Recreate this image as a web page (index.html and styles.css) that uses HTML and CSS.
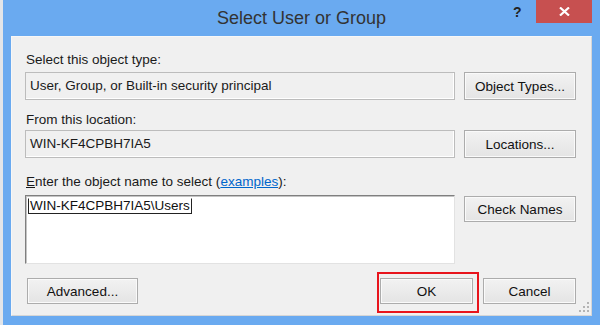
FILE: index.html
```html
<!DOCTYPE html>
<html lang="en">
  <head>
    <meta charset="UTF-8" />
    <title>Select User or Group</title>
    <link rel="stylesheet" href="styles.css">
  </head>
  <body>
    <div class="window">
      <div class="titlebar">
        <div class="title">Select User or Group</div>
        <div class="caption-buttons">
          <span class="help">?</span>
          <span class="close">
            <svg width="11" height="9" viewBox="0 0 11 9">
              <path d="M1 0.5 L10 8.5 M10 0.5 L1 8.5" stroke="#fff" stroke-width="2.2" />
            </svg>
          </span>
        </div>
      </div>

      <div class="client">
        <!-- object type -->
        <div class="label first">Select this object type:</div>
        <div class="row">
          <div class="field">User, Group, or Built-in security principal</div>
          <button class="btn">Object Types...</button>
        </div>

        <!-- location -->
        <div class="label second">From this location:</div>
        <div class="row row-tight">
          <div class="field">WIN-KF4CPBH7IA5</div>
          <button class="btn">Locations...</button>
        </div>

        <!-- names -->
        <div class="label third"><u>E</u>nter the object name to select (<a class="link">examples</a>):</div>
        <div class="row row-names">
          <div class="names"><span class="resolved">WIN-KF4CPBH7IA5\Users</span></div>
          <button class="btn btn-check">Check Names</button>
        </div>

        <div class="footer">
          <button class="btn btn-advanced">Advanced...</button>
          <div class="footer-right">
            <div class="highlight">
              <button class="btn btn-small">OK</button>
            </div>
            <button class="btn btn-small">Cancel</button>
          </div>
        </div>

        <svg class="grip" width="12" height="11" viewBox="0 0 12 11">
          <rect x="9" y="0" width="2" height="2" fill="#b4b4b4" />
          <rect x="5" y="4" width="2" height="2" fill="#b4b4b4" />
          <rect x="9" y="4" width="2" height="2" fill="#b4b4b4" />
          <rect x="1" y="8" width="2" height="2" fill="#b4b4b4" />
          <rect x="5" y="8" width="2" height="2" fill="#b4b4b4" />
          <rect x="9" y="8" width="2" height="2" fill="#b4b4b4" />
        </svg>
      </div>
    </div>
  </body>
</html>
```

FILE: styles.css
```css
html,
body {
  margin: 0;
  padding: 0;
  width: 600px;
  height: 325px;
  overflow: hidden;
  background-color: #e2e5e9;
  font-family: "Liberation Sans", Arial, sans-serif;
  font-size: 13.5px;
  color: #1a1a1a;
}

.window {
  margin-left: 3px;
  width: 597px;
  height: 325px;
  background-color: #6aaaf0;
  display: flex;
  flex-direction: column;
}

.titlebar {
  height: 36px;
  display: grid;
  grid-template-columns: 1fr auto 1fr;
}

.title {
  grid-column: 2;
  line-height: 36px;
  font-size: 18px;
  color: #333;
}

.caption-buttons {
  grid-column: 3;
  justify-self: end;
  align-self: start;
  display: flex;
  margin-right: 8px;
}

.help {
  width: 10px;
  margin-right: 13px;
  line-height: 24px;
  font-size: 14px;
  font-weight: bold;
  color: #222;
}

.close {
  width: 56px;
  height: 23px;
  background-color: #c75050;
  display: flex;
  align-items: center;
  justify-content: center;
}

.client {
  position: relative;
  margin: 0 8px 9px 8px;
  height: 278px;
  padding: 15px 15px 0 13px;
  background-color: #f0f0f0;
  border: 1px solid #f7f7f7;
  border-right-color: #d6d6d6;
  border-bottom-color: #d6d6d6;
}

.label {
  height: 16px;
  line-height: 16px;
  padding-left: 1px;
}

.second {
  margin-top: 12px;
}

.third {
  margin-top: 16px;
}

.link {
  color: #0066cc;
  text-decoration: underline;
}

.row {
  display: flex;
  gap: 9px;
  margin-top: 4px;
  height: 28px;
}

.row-tight {
  margin-top: 2px;
}

.row-names {
  margin-top: 5px;
  height: 69px;
}

.field {
  flex: 1;
  box-sizing: border-box;
  height: 28px;
  line-height: 26px;
  padding-left: 4px;
  border: 1px solid #bcbcbc;
  box-shadow: inset -1px -1px 0 #fff;
}

.names {
  flex: 1;
  box-sizing: border-box;
  height: 69px;
  padding: 2px 0 0 2px;
  background-color: #fff;
  border: 1px solid;
  border-color: #7f7f7f #e2e2e2 #e2e2e2 #7f7f7f;
  box-shadow: inset 1px 1px 0 #c4c4c4;
}

.resolved {
  display: inline-block;
  line-height: 14px;
  padding: 0 1px 0 1px;
  border: 1px solid #222;
  border-top-color: transparent;
  color: #111;
}

.btn {
  box-sizing: border-box;
  width: 112px;
  height: 28px;
  padding: 0;
  font-family: inherit;
  font-size: 13.5px;
  color: #111;
  background: linear-gradient(#f2f2f2, #e4e4e4);
  border: 1px solid #acacac;
  box-shadow: inset 0 0 0 1px #fafafa;
}

.btn-check {
  height: 26px;
  margin-top: 1px;
}

.footer {
  display: flex;
  justify-content: space-between;
  margin-top: 14px;
}

.btn-advanced {
  width: 111px;
  height: 26px;
  margin-left: 2px;
}

.footer-right {
  display: flex;
  gap: 10px;
}

.btn-small {
  width: 93px;
  height: 26px;
}

.highlight {
  position: relative;
  display: flex;
}

.highlight::after {
  content: "";
  position: absolute;
  left: -3px;
  right: -6px;
  top: -6px;
  bottom: -9px;
  border: 2px solid #e8141c;
}

.grip {
  position: absolute;
  right: 1px;
  bottom: 2px;
}
```
